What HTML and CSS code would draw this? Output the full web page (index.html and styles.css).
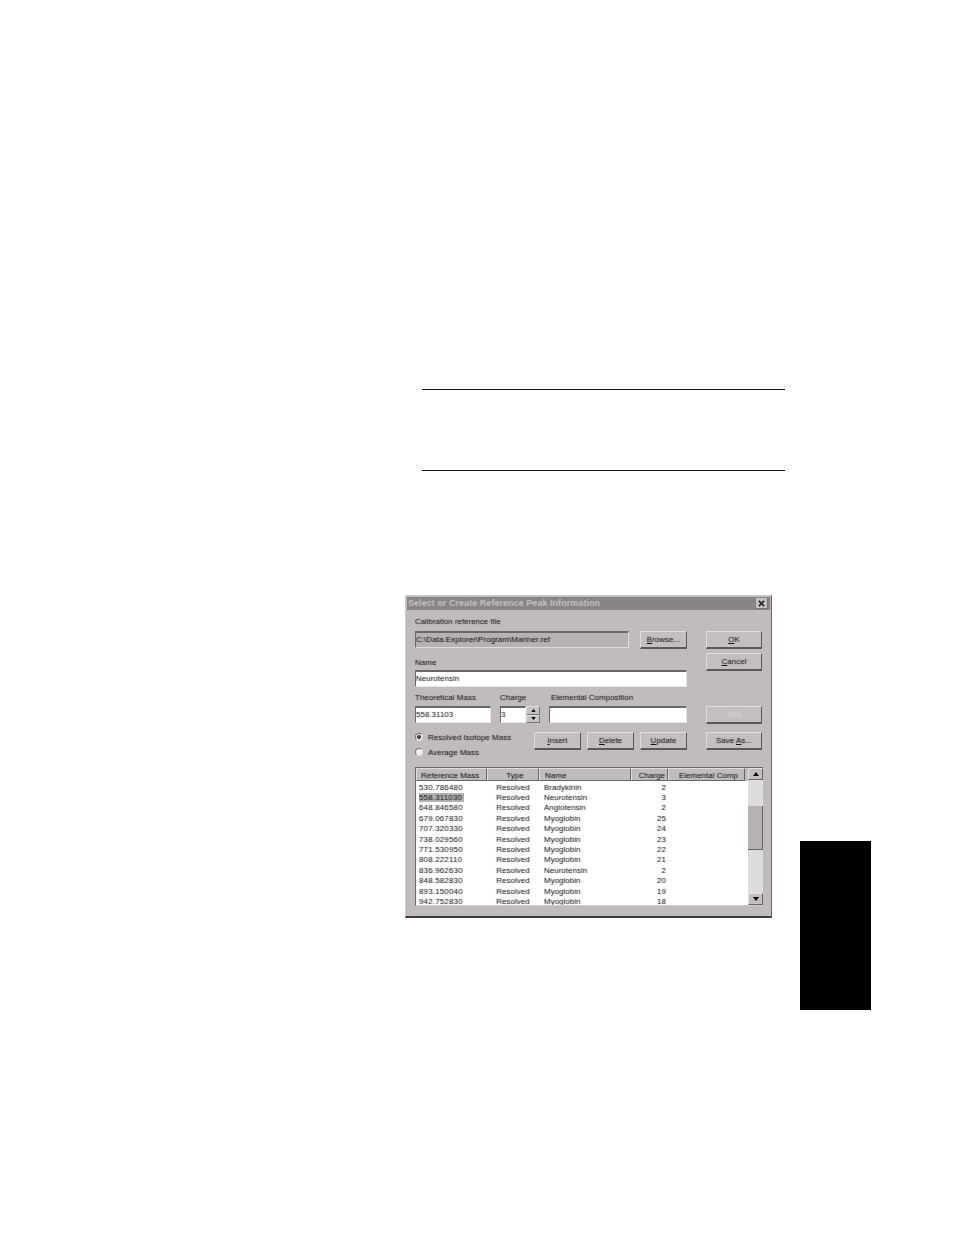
FILE: index.html
```html
<!DOCTYPE html>
<html lang="en">
<head>
<meta charset="utf-8">
<title>Select or Create Reference Peak Information</title>
<link rel="stylesheet" href="styles.css">
</head>
<body>
<main class="page">
  <div class="rules"></div>
  <section class="dialog">
    <header class="titlebar">
      <span>Select or Create Reference Peak Information</span>
      <span class="close"><svg viewBox="0 0 8 8" width="7" height="7"><path d="M1 1L7 7M7 1L1 7" stroke="#222" stroke-width="1.8"/></svg></span>
    </header>
    <div class="upper">
      <div class="left">
        <div class="lbl lbl-first">Calibration reference file</div>
        <div class="row row-file">
          <div class="field field-file">C:\Data.Explorer\Program\Mariner.ref</div>
          <button class="btn btn-col"><u>B</u>rowse...</button>
        </div>
        <div class="lbl lbl-name">Name</div>
        <div class="field field-name">Neurotensin</div>
        <div class="labels3">
          <span class="lbl c-mass">Theoretical Mass</span>
          <span class="lbl c-charge">Charge</span>
          <span class="lbl">Elemental Composition</span>
        </div>
        <div class="row row-fields">
          <div class="field f-mass">558.31103</div>
          <div class="field f-charge">3</div>
          <div class="spin">
            <span class="spin-btn"><svg viewBox="0 0 6 4" width="5" height="3"><path d="M3 0L6 4H0Z"/></svg></span>
            <span class="spin-btn"><svg viewBox="0 0 6 4" width="5" height="3"><path d="M0 0H6L3 4Z"/></svg></span>
          </div>
          <div class="field f-comp"></div>
        </div>
        <div class="row row-actions">
          <div class="radios">
            <div class="radio"><span class="dot on"></span>Resolved Isotope Mass</div>
            <div class="radio"><span class="dot"></span>Average Mass</div>
          </div>
          <div class="actions">
            <button class="btn btn-act"><u>I</u>nsert</button>
            <button class="btn btn-act"><u>D</u>elete</button>
            <button class="btn btn-act"><u>U</u>pdate</button>
          </div>
        </div>
      </div>
      <div class="right">
        <button class="btn btn-ok"><u>O</u>K</button>
        <button class="btn btn-cancel"><u>C</u>ancel</button>
        <button class="btn btn-sort" disabled>Sort</button>
        <button class="btn btn-save">Save <u>A</u>s...</button>
      </div>
    </div>
    <div class="list">
      <div class="list-main">
        <div class="thead">
          <span class="th w1">Reference Mass</span>
          <span class="th w2 ctr">Type</span>
          <span class="th w3">Name</span>
          <span class="th w4 rgt">Charge</span>
          <span class="th w5 ctr">Elemental Comp</span>
        </div>
        <div class="tbody">
          <div class="tr"><span class="w1">530.786480</span><span class="w2 ctr">Resolved</span><span class="w3">Bradykinin</span><span class="w4 rgt">2</span></div>
          <div class="tr"><span class="w1"><b class="sel">558.311030</b></span><span class="w2 ctr">Resolved</span><span class="w3">Neurotensin</span><span class="w4 rgt">3</span></div>
          <div class="tr"><span class="w1">648.846580</span><span class="w2 ctr">Resolved</span><span class="w3">Angiotensin</span><span class="w4 rgt">2</span></div>
          <div class="tr"><span class="w1">679.067830</span><span class="w2 ctr">Resolved</span><span class="w3">Myoglobin</span><span class="w4 rgt">25</span></div>
          <div class="tr"><span class="w1">707.320330</span><span class="w2 ctr">Resolved</span><span class="w3">Myoglobin</span><span class="w4 rgt">24</span></div>
          <div class="tr"><span class="w1">738.029560</span><span class="w2 ctr">Resolved</span><span class="w3">Myoglobin</span><span class="w4 rgt">23</span></div>
          <div class="tr"><span class="w1">771.530950</span><span class="w2 ctr">Resolved</span><span class="w3">Myoglobin</span><span class="w4 rgt">22</span></div>
          <div class="tr"><span class="w1">808.222110</span><span class="w2 ctr">Resolved</span><span class="w3">Myoglobin</span><span class="w4 rgt">21</span></div>
          <div class="tr"><span class="w1">836.962630</span><span class="w2 ctr">Resolved</span><span class="w3">Neurotensin</span><span class="w4 rgt">2</span></div>
          <div class="tr"><span class="w1">848.582830</span><span class="w2 ctr">Resolved</span><span class="w3">Myoglobin</span><span class="w4 rgt">20</span></div>
          <div class="tr"><span class="w1">893.150040</span><span class="w2 ctr">Resolved</span><span class="w3">Myoglobin</span><span class="w4 rgt">19</span></div>
          <div class="tr"><span class="w1">942.752830</span><span class="w2 ctr">Resolved</span><span class="w3">Myoglobin</span><span class="w4 rgt">18</span></div>
        </div>
      </div>
      <div class="scroll">
        <span class="sbtn"><svg viewBox="0 0 6 4" width="6" height="4"><path d="M3 0L6 4H0Z"/></svg></span>
        <div class="track"><span class="thumb"></span></div>
        <span class="sbtn"><svg viewBox="0 0 6 4" width="6" height="4"><path d="M0 0H6L3 4Z"/></svg></span>
      </div>
    </div>
  </section>
  <div class="tab"></div>
</main>
</body>
</html>
```
FILE: styles.css
```css
* { box-sizing: border-box; }
html, body { margin: 0; padding: 0; background: #fff; }
.page { position: relative; width: 954px; height: 1235px; overflow: hidden; padding-top: 389px; font-family: "Liberation Sans", Arial, sans-serif; }
.rules { margin-left: 422px; width: 363px; height: 82px; border-top: 1px solid #111; border-bottom: 1px solid #111; }
.tab { position: absolute; left: 800px; top: 841px; width: 71px; height: 169px; background: #000; }

.dialog { margin: 124px 0 0 405px; width: 367px; height: 323px; background: #bfbbbf; border: 1px solid #cfccd0; border-right-color: #6a686a; border-bottom: 2px solid #3c3a3c; padding: 1px 1px 0; font-size: 8px; color: transparent; text-shadow: 0 0 0.8px #111; }
.titlebar { height: 13px; display: flex; align-items: center; justify-content: space-between; padding: 0 2px 2px 1px; background: #878387; font-weight: bold; font-size: 9.1px; text-shadow: 0 0 0.9px #c8c5c8; }
.close { width: 12px; height: 11px; margin-top: 2px; background: #c4c0c4; display: flex; align-items: center; justify-content: center; border-right: 1px solid #777; border-bottom: 1px solid #777; }

.upper { display: flex; padding-left: 8px; }
.left { width: 274px; }
.right { width: 56px; margin-left: 17px; display: flex; flex-direction: column; }

.lbl { display: block; line-height: 10px; height: 10px; white-space: nowrap; }
.lbl-first { margin-top: 7px; font-size: 7.9px; }
.lbl-name { margin-top: 9px; margin-bottom: -1px; }
.row { display: flex; }
.row-file { margin-top: 4px; gap: 11px; }
.field { height: 17px; background: #fff; border: 1px solid #e8e6e8; border-top: 2px solid #6a686a; border-left: 1px solid #6a686a; padding-left: 0; line-height: 14px; white-space: nowrap; overflow: hidden; }
.field-file { width: 214px; background: #b5b1b5; border-bottom-color: #dedbde; border-right-color: #dedbde; font-size: 8.1px; }
.field-name { width: 272px; margin-top: 3px; }
.labels3 { display: flex; margin-top: 6px; margin-bottom: -1px; }
.c-mass { width: 85px; }
.c-charge { width: 51px; }
.row-fields { margin-top: 4px; }
.f-mass { width: 76px; margin-right: 9px; }
.f-charge { width: 26px; }
.spin { width: 14px; height: 17px; display: flex; flex-direction: column; margin-right: 9px; }
.spin-btn { flex: 1; display: flex; align-items: center; justify-content: center; background: #c6c3c6; border-right: 1px solid #777; border-bottom: 1px solid #777; border-top: 1px solid #e4e2e4; border-left: 1px solid #e4e2e4; }
.f-comp { width: 138px; }
.row-actions { margin-top: 9px; justify-content: space-between; width: 272px; }
.radios { display: flex; flex-direction: column; gap: 5px; }
.radio { display: flex; align-items: center; height: 10px; white-space: nowrap; }
.dot { width: 8px; height: 8px; border-radius: 50%; background: #f0eff0; border: 1px solid #dcdadc; border-top-color: #777; border-left-color: #777; margin-right: 5px; }
.dot.on { background: radial-gradient(circle, #444 0 1.6px, #e4e2e4 2.2px); }
.actions { display: flex; gap: 6px; }

.btn { display: block; padding: 0; margin: 0; background: #c2bec2; color: transparent; font: inherit; text-shadow: inherit; height: 18px; border: 1px solid #dedcde; border-right: 1px solid #5a585a; border-bottom: 2px solid #5a585a; text-align: center; white-space: nowrap; }
.btn-col { width: 47px; }
.btn-act { width: 47px; }
.btn-ok { margin-top: 21px; }
.btn-cancel { margin-top: 4px; }
.btn-sort { margin-top: 35px; text-shadow: 0 0 0.8px #dcdadc; }
.btn-save { margin-top: 8px; }
.right .btn { width: 56px; }

.list { display: flex; margin: 10px 0 0 8px; width: 348px; height: 139px; border-top: 1px solid #6a686a; border-left: 1px solid #6a686a; border-bottom: 1px solid #d0ced0; background: #fff; overflow: hidden; }
.list-main { width: 332px; }
.thead { display: flex; height: 13px; background: #bfbbbf; }
.th { height: 13px; line-height: 13px; padding-left: 4px; border-top: 1px solid #dedcde; border-left: 1px solid #dedcde; border-right: 1px solid #666; border-bottom: 1px solid #666; white-space: nowrap; overflow: hidden; }
.w1 { width: 71px; flex: none; }
.w2 { width: 52px; flex: none; }
.w3 { width: 92px; flex: none; padding-left: 5px; }
.w4 { width: 37px; flex: none; padding-right: 2px; }
.w5 { width: 77px; flex: none; }
.ctr { text-align: center; }
.rgt { text-align: right; }
.tbody { padding-top: 1.6px; }
.tr { display: flex; height: 10.42px; line-height: 10.42px; white-space: nowrap; }
.tr .w1 { padding-left: 3px; letter-spacing: 0.15px; }
.sel { font-weight: normal; background: #b4b0b4; padding-right: 2px; }

.scroll { width: 15px; display: flex; flex-direction: column; margin-left: 0; }
.sbtn { height: 12px; flex: none; display: flex; align-items: center; justify-content: center; background: #c2bec2; border-top: 1px solid #e4e2e4; border-left: 1px solid #e4e2e4; border-right: 1px solid #666; border-bottom: 1px solid #666; }
.track { flex: 1; background: #dedbde; padding-top: 26px; }
.thumb { display: block; height: 44px; background: #b5b1b5; border-right: 1px solid #666; border-bottom: 1px solid #666; }
```
